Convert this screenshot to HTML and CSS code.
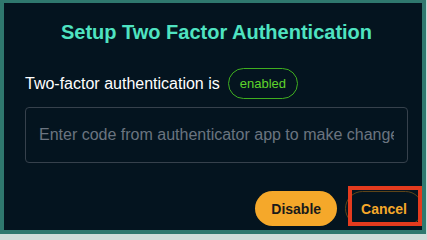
FILE: index.html
```html
<!DOCTYPE html>
<html>
<head>
<meta charset="utf-8">
<link rel="stylesheet" href="styles.css">
</head>
<body>
<div class="frame">
  <h1 class="title">Setup Two Factor Authentication</h1>
  <div class="status-row">
    <span class="status-text">Two-factor authentication is</span>
    <span class="badge">enabled</span>
  </div>
  <input class="code-input" type="text" placeholder="Enter code from authenticator app to make changes">
  <div class="footer">
    <button class="btn btn-primary">Disable</button>
    <button class="btn btn-outline">Cancel</button>
  </div>
  <div class="highlight"></div>
</div>
</body>
</html>
```
FILE: styles.css
```css
html, body {
  margin: 0;
  padding: 0;
}
body {
  background: #cfdcd9;
  font-family: "Liberation Sans", Arial, sans-serif;
}
.frame {
  position: relative;
  overflow: hidden;
  box-sizing: border-box;
  width: 426px;
  height: 234px;
  border-style: solid;
  border-color: #2f786e;
  border-width: 3px 4px 4px 4px;
  background: #04141f;
  padding: 17px 14px 0 21px;
}
.title {
  margin: 0;
  font-size: 20px;
  line-height: 24px;
  font-weight: bold;
  color: #4fe3c1;
  text-align: center;
}
.status-row {
  margin-top: 24px;
  display: flex;
  align-items: center;
  gap: 8px;
}
.status-text {
  color: #ffffff;
  font-size: 16px;
  line-height: 18px;
}
.badge {
  box-sizing: border-box;
  height: 31px;
  display: flex;
  align-items: center;
  padding: 0 11px;
  border: 1px solid #3fae1f;
  border-radius: 16px;
  color: #5fd42b;
  font-size: 13px;
}
.code-input {
  display: block;
  margin-top: 8px;
  box-sizing: border-box;
  width: 100%;
  height: 56px;
  padding: 0 13px;
  border: 1px solid #36414c;
  border-radius: 4px;
  background: transparent;
  color: #ffffff;
  font-family: "Liberation Sans", Arial, sans-serif;
  font-size: 16px;
  outline: none;
}
.code-input::placeholder {
  color: #6b7480;
}
.footer {
  margin-top: 28px;
  margin-right: -15px;
  display: flex;
  justify-content: flex-end;
  gap: 8px;
}
.btn {
  box-sizing: border-box;
  height: 35px;
  border-radius: 18px;
  font-family: "Liberation Sans", Arial, sans-serif;
  font-size: 14px;
  font-weight: bold;
  cursor: pointer;
}
.btn-primary {
  padding: 0 16px;
  border: none;
  background: #f5a82a;
  color: #1a1a1a;
}
.btn-outline {
  padding: 0 15px;
  border: 1px solid #5e4418;
  background: transparent;
  color: #f5a82a;
}
.highlight {
  position: absolute;
  left: 344px;
  top: 183px;
  width: 74px;
  height: 40px;
  box-sizing: border-box;
  border: 4px solid #e43b1e;
}
```
